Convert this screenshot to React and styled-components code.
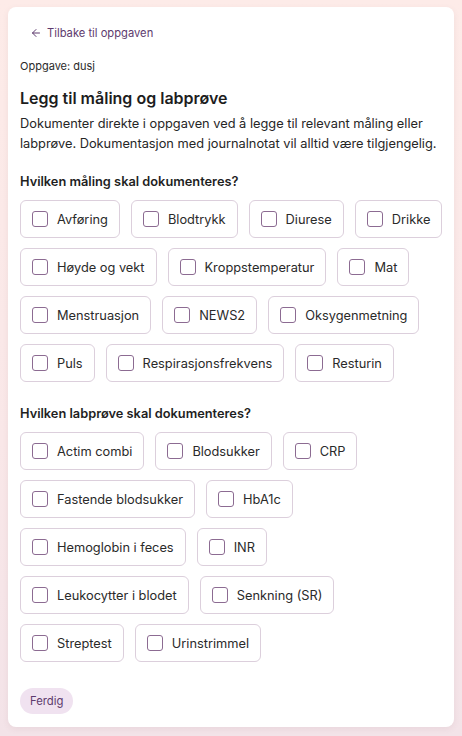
import styled, { createGlobalStyle } from "styled-components";
import { ArrowLeft } from "lucide-react";

const GlobalStyle = createGlobalStyle`
  html, body {
    margin: 0;
    padding: 0;
  }
  html {
    background: linear-gradient(180deg, #fdebe8 0%, #f9e7e8 60%, #f3e3e8 100%);
    min-height: 100%;
    overflow: hidden;
  }
  body {
    font-family: Inter, "Noto Sans", sans-serif;
    color: #1f1f1f;
  }
  * {
    box-sizing: border-box;
  }
`;

const measurements = [
  "Avføring",
  "Blodtrykk",
  "Diurese",
  "Drikke",
  "Høyde og vekt",
  "Kroppstemperatur",
  "Mat",
  "Menstruasjon",
  "NEWS2",
  "Oksygenmetning",
  "Puls",
  "Respirasjonsfrekvens",
  "Resturin",
];

const labTests = [
  "Actim combi",
  "Blodsukker",
  "CRP",
  "Fastende blodsukker",
  "HbA1c",
  "Hemoglobin i feces",
  "INR",
  "Leukocytter i blodet",
  "Senkning (SR)",
  "Streptest",
  "Urinstrimmel",
];

const App = () => {
  return (
    <>
      <GlobalStyle />
      <Page>
        <Card>
          <BackLink>
            <ArrowLeft size={12} strokeWidth={2} />
            Tilbake til oppgaven
          </BackLink>
          <TaskLabel>Oppgave: dusj</TaskLabel>
          <Title>Legg til måling og labprøve</Title>
          <Description>
            Dokumenter direkte i oppgaven ved å legge til relevant måling eller
            labprøve. Dokumentasjon med journalnotat vil alltid være tilgjengelig.
          </Description>

          <Section>
            <SectionTitle>Hvilken måling skal dokumenteres?</SectionTitle>
            <Options>
              {measurements.map((m) => (
                <Option key={m}>
                  <Box />
                  {m}
                </Option>
              ))}
            </Options>
          </Section>

          <Section>
            <SectionTitle>Hvilken labprøve skal dokumenteres?</SectionTitle>
            <Options>
              {labTests.map((m) => (
                <Option key={m}>
                  <Box />
                  {m}
                </Option>
              ))}
            </Options>
          </Section>

          <DoneButton>Ferdig</DoneButton>
        </Card>
      </Page>
    </>
  );
};
export default App;

const Page = styled.div`
  padding: 7px 8px 8px 8px;
`;

const Card = styled.div`
  background: #ffffff;
  border-radius: 8px;
  box-shadow: 0 2px 6px rgba(120, 60, 80, 0.08);
  padding: 12px 10px 13px 12px;
  display: flex;
  flex-direction: column;
  align-items: flex-start;
`;

const BackLink = styled.button`
  display: flex;
  align-items: center;
  gap: 5px;
  height: 28px;
  padding: 0 10px;
  border: none;
  background: none;
  color: #5e3b6e;
  font-family: Inter, sans-serif;
  font-size: 11.2px;
  cursor: pointer;
`;

const TaskLabel = styled.div`
  margin-top: 10px;
  font-size: 11px;
  line-height: 18px;
  color: #2a2a2a;
`;

const Title = styled.h1`
  margin: 11px 0 0 0;
  font-size: 16px;
  line-height: 24px;
  font-weight: 600;
  color: #1d1d1d;
`;

const Description = styled.p`
  margin: 4px 0 0 0;
  font-size: 12.8px;
  line-height: 20px;
  color: #262626;
`;

const Section = styled.div`
  display: flex;
  flex-direction: column;
  margin-top: 19px;
  & + & {
    margin-top: 23px;
  }
`;

const SectionTitle = styled.h2`
  margin: 0 0 9px 0;
  font-size: 12.8px;
  line-height: 18px;
  font-weight: 600;
  color: #1f1f1f;
`;

const Options = styled.div`
  display: flex;
  flex-wrap: wrap;
  gap: 10px 11px;
`;

const Option = styled.label`
  display: flex;
  align-items: center;
  gap: 9px;
  height: 38px;
  padding: 0 11px;
  border: 1px solid #dccfdc;
  border-radius: 6px;
  font-size: 12.8px;
  color: #2a2a2a;
  cursor: pointer;
`;

const Box = styled.span`
  width: 16px;
  height: 16px;
  border: 1.2px solid #8c6b92;
  border-radius: 3px;
  background: #fff;
`;

const DoneButton = styled.button`
  margin-top: 26px;
  height: 26px;
  padding: 0 10px;
  border: none;
  border-radius: 13px;
  background: #f0e2f0;
  color: #5e3b6e;
  font-family: Inter, sans-serif;
  font-size: 11.3px;
  cursor: pointer;
`;
